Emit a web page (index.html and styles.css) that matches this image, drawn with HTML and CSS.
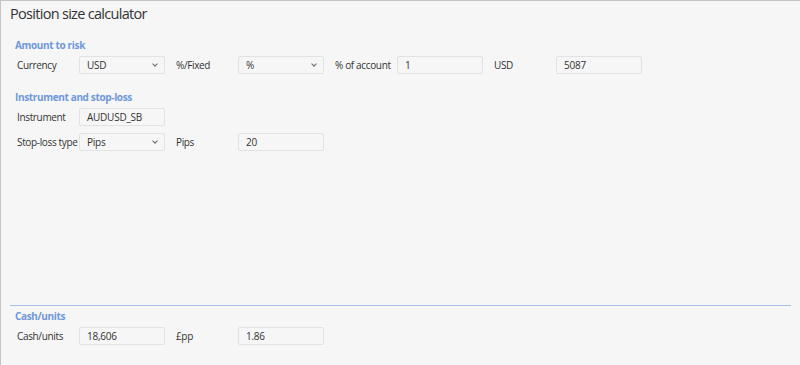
FILE: index.html
```html
<!DOCTYPE html>
<html lang="en">
<head>
    <meta charset="UTF-8">
    <meta name="viewport" content="width=device-width, initial-scale=1.0">
    <title>Position size calculator</title>
    <link rel="stylesheet" href="styles.css">
</head>
<body>

    <div class="panel">
        <h1 class="title">Position size calculator</h1>

        <div class="main">
            <h3 class="section">Amount to risk</h3>
            <div class="row">
                <label>Currency</label>
                <div class="field select">USD <span class="chev"></span></div>
                <label>%/Fixed</label>
                <div class="field select">% <span class="chev"></span></div>
                <label>% of account</label>
                <div class="field">1</div>
                <label>USD</label>
                <div class="field">5087</div>
            </div>

            <h3 class="section">Instrument and stop-loss</h3>
            <div class="row">
                <label>Instrument</label>
                <div class="field">AUDUSD_SB</div>
            </div>
            <div class="row">
                <label>Stop-loss type</label>
                <div class="field select">Pips <span class="chev"></span></div>
                <label>Pips</label>
                <div class="field">20</div>
            </div>
        </div>

        <div class="results">
            <h3 class="section">Cash/units</h3>
            <div class="row">
                <label>Cash/units</label>
                <div class="field">18,606</div>
                <label>£pp</label>
                <div class="field">1.86</div>
            </div>
        </div>
    </div>

</body>
</html>
```

FILE: styles.css
```css
html, body {
    margin: 0;
    height: 100%;
}
body {
    font-family: "Open Sans", sans-serif;
    background-color: #f6f6f6;
    color: #333;
}
.panel {
    height: 100%;
    box-sizing: border-box;
    border-top: 1px solid #c4c4c4;
    border-left: 1px solid #c4c4c4;
    display: flex;
    flex-direction: column;
}
.title {
    margin: 0;
    padding: 3px 0 0 9px;
    font-size: 14.5px;
    font-weight: 400;
    letter-spacing: -0.7px;
    line-height: 20px;
    color: #333;
}
.main {
    flex: 1;
    padding: 14px 0 0 14px;
}
.section {
    margin: 0 0 4px 0;
    font-size: 10px;
    font-weight: 700;
    letter-spacing: -0.35px;
    line-height: 14px;
    color: #6f98da;
}
.row {
    display: flex;
    align-items: center;
    padding-left: 2px;
    margin-bottom: 7px;
}
.row + .section {
    margin-top: 16px;
}
label {
    width: 62px;
    font-size: 10px;
    letter-spacing: -0.35px;
    line-height: 18px;
    white-space: nowrap;
}
.field {
    box-sizing: border-box;
    width: 86px;
    height: 18px;
    margin-right: 11px;
    padding: 0 7px;
    border: 1px solid #e2e2e2;
    border-radius: 2px;
    font-size: 10px;
    letter-spacing: -0.25px;
    line-height: 16px;
    position: relative;
}
.chev {
    position: absolute;
    right: 7px;
    top: 5px;
    width: 3px;
    height: 3px;
    border-right: 1px solid #666;
    border-bottom: 1px solid #666;
    transform: rotate(45deg);
}
.results {
    margin: 0 9px 0 9px;
    border-top: 1px solid #a9bfe6;
    padding: 3px 0 13px 5px;
}
```
